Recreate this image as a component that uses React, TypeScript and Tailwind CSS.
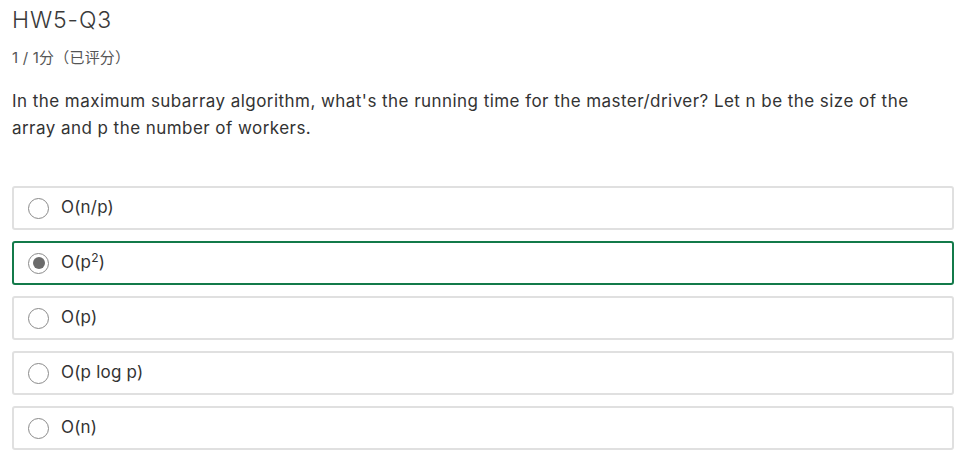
import React from "react";

const items = [
  { label: <>O(n/p)</>, selected: false },
  { label: <>O(p<sup className="text-[12px] relative -top-[6px] align-baseline">2</sup>)</>, selected: true },
  { label: <>O(p)</>, selected: false },
  { label: <>O(p log p)</>, selected: false },
  { label: <>O(n)</>, selected: false },
];

function Radio({ selected }: { selected: boolean }) {
  return (
    <span className="w-[21px] h-[21px] rounded-full border border-[#8a8a8a] bg-white flex items-center justify-center shrink-0">
      {selected && <span className="w-[12px] h-[12px] rounded-full bg-[#6b6b6b]" />}
    </span>
  );
}

export default function App() {
  return (
    <div
      className="bg-white w-[964px] h-[459px] px-[12px] text-[#333]"
      style={{ fontFamily: 'Inter, "Noto Sans CJK SC", sans-serif' }}
    >
      <div className="pt-[5px] text-[23px] leading-[30px] text-[#3a3a3a] font-light tracking-[0.9px]">HW5-Q3</div>
      <div className="mt-[13px] text-[15px] leading-[20px] text-[#555] tracking-[0.2px]">1 / 1分（已评分）</div>
      <div className="mt-[20px] text-[17px] leading-[27px] text-[#333] pr-[30px] tracking-[0.45px]">
        In the maximum subarray algorithm, what's the running time for the master/driver? Let n be the size of the array and p the number of workers.
      </div>
      <div className="mt-[44px] flex flex-col gap-[11px] w-[942px]">
        {items.map((o, i) => (
          <div
            key={i}
            className={`h-[44px] rounded-[3px] border-2 flex items-center pl-[14px] gap-[12px] ${
              o.selected ? "border-[#137a4a]" : "border-[#e0e0e0]"
            }`}
          >
            <Radio selected={o.selected} />
            <span className="text-[17px] text-[#333] tracking-[0.2px]">{o.label}</span>
          </div>
        ))}
      </div>
    </div>
  );
}
